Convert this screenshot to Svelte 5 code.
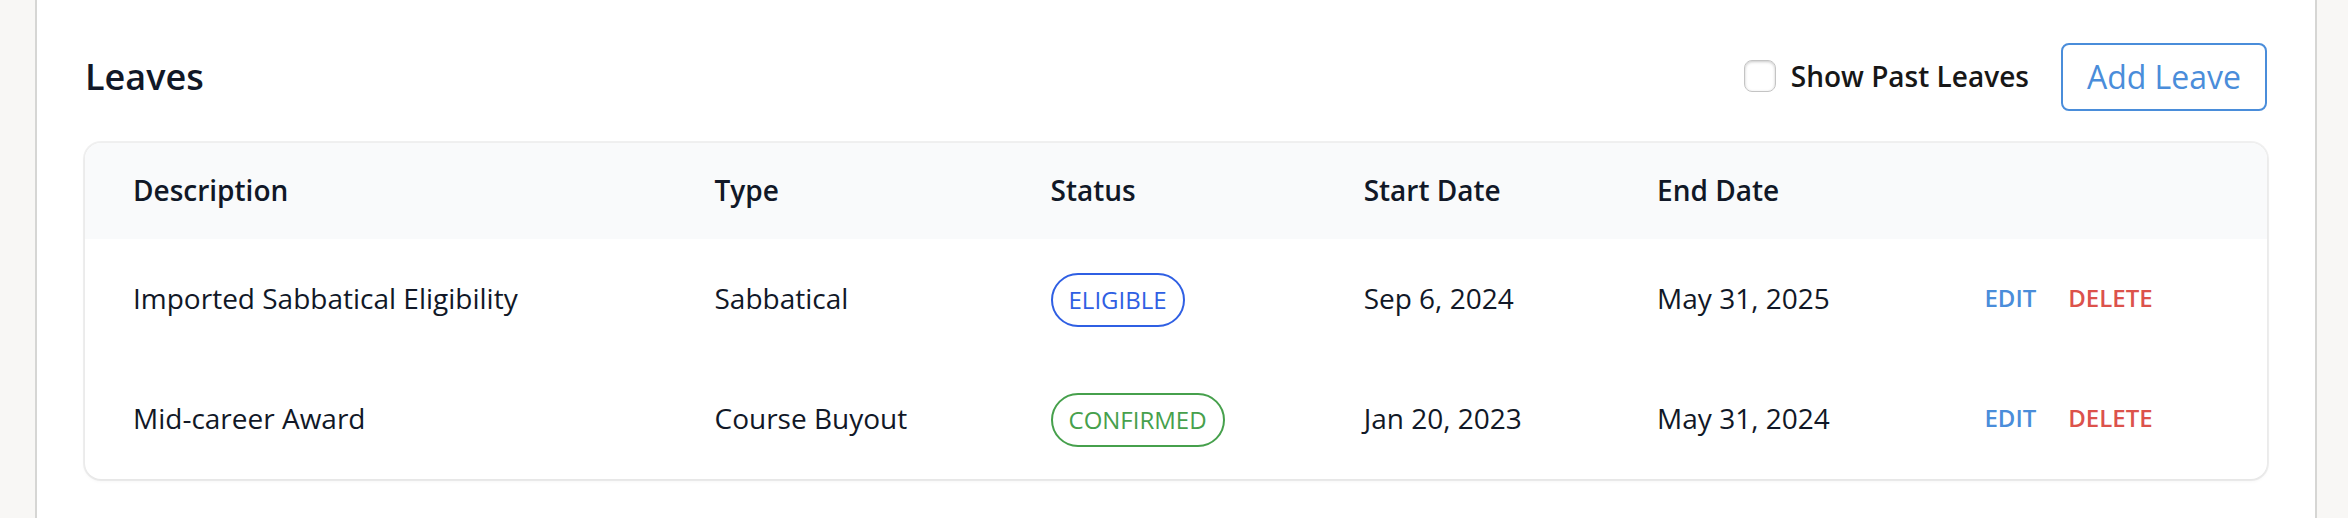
<script>
  let showPast = $state(false);

  const leaves = [
    { description: 'Imported Sabbatical Eligibility', type: 'Sabbatical', status: 'Eligible', start: 'Sep 6, 2024', end: 'May 31, 2025' },
    { description: 'Mid-career Award', type: 'Course Buyout', status: 'Confirmed', start: 'Jan 20, 2023', end: 'May 31, 2024' }
  ];
</script>

<main class="page">
  <section class="panel">
    <header class="toolbar">
      <h2>Leaves</h2>
      <div class="actions">
        <label class="toggle">
          <input type="checkbox" bind:checked={showPast} />
          <span>Show Past Leaves</span>
        </label>
        <button class="add" type="button">Add Leave</button>
      </div>
    </header>

    <div class="card">
      <table>
        <colgroup>
          <col class="c-description" />
          <col class="c-type" />
          <col class="c-status" />
          <col class="c-start" />
          <col class="c-end" />
          <col />
        </colgroup>
        <thead>
          <tr>
            <th scope="col">Description</th>
            <th scope="col">Type</th>
            <th scope="col">Status</th>
            <th scope="col">Start Date</th>
            <th scope="col">End Date</th>
            <td></td>
          </tr>
        </thead>
        <tbody>
          {#each leaves as leave}
            <tr>
              <td>{leave.description}</td>
              <td>{leave.type}</td>
              <td class="status"><span class="badge {leave.status.toLowerCase()}">{leave.status}</span></td>
              <td>{leave.start}</td>
              <td>{leave.end}</td>
              <td>
                <div class="row-actions">
                  <button class="edit" type="button">Edit</button>
                  <button class="delete" type="button">Delete</button>
                </div>
              </td>
            </tr>
          {/each}
        </tbody>
      </table>
    </div>
  </section>
</main>

<style>
  :global(body) {
    background: #f8f7f5;
  }

  .page {
    box-sizing: border-box;
    min-height: 100vh;
    display: flex;
    padding: 0 31px 0 35px;
    font-family: 'Open Sans', 'Noto Sans', sans-serif;
    font-size: 28px;
    line-height: 40px;
    color: #111827;
  }

  .panel {
    flex: 1;
    min-width: 0;
    padding: 43px 48px 32px;
    background: #fff;
    border: solid #d6d6d4;
    border-width: 0 2px;
  }

  .toolbar {
    display: flex;
    align-items: center;
    justify-content: space-between;
    margin-bottom: 32px;
  }

  h2 {
    margin: 0;
    font-size: 36px;
    line-height: 48px;
    font-weight: 600;
  }

  .actions {
    display: flex;
    align-items: center;
    gap: 32px;
  }

  .toggle {
    display: flex;
    align-items: center;
    gap: 15px;
    padding-bottom: 2px;
    font-weight: 600;
    color: #171717;
    cursor: pointer;
  }

  .toggle input {
    appearance: none;
    box-sizing: border-box;
    width: 32px;
    height: 32px;
    margin: 0;
    border: 1px solid #c4c4c4;
    border-radius: 8px;
    background: #fff;
    box-shadow: inset 0 1px 3px rgba(0, 0, 0, 0.22);
  }

  .toggle input:checked {
    background: #4a8dda;
    border-color: #4a8dda;
  }

  button {
    margin: 0;
    font-family: inherit;
    background: none;
    cursor: pointer;
  }

  .add {
    padding: 8px 24px;
    border: 2px solid #4a8dda;
    border-radius: 8px;
    font-size: 32px;
    line-height: 48px;
    color: #4a8dda;
  }

  .card {
    overflow: hidden;
    border-radius: 16px;
    background: #fff;
    box-shadow: 0 0 0 2px rgba(0, 0, 0, 0.06), 0 2px 4px rgba(0, 0, 0, 0.05);
  }

  table {
    width: 100%;
    table-layout: fixed;
    border-collapse: collapse;
  }

  .c-description { width: 27.75%; }
  .c-type { width: 15.4%; }
  .c-status { width: 14.35%; }
  .c-start { width: 13.45%; }
  .c-end { width: 15%; }

  thead {
    background: #f9fafb;
  }

  th,
  td {
    box-sizing: border-box;
    padding: 0 24px 2px;
    text-align: left;
    white-space: nowrap;
  }

  th {
    height: 96px;
    font-weight: 600;
  }

  tbody td {
    height: 120px;
  }

  th:first-child,
  td:first-child {
    padding-left: 48px;
  }

  td.status {
    padding: 2px 24px 0;
  }

  .badge {
    display: inline-block;
    vertical-align: middle;
    padding: 5px 16px;
    border: 2px solid;
    border-radius: 27px;
    font-size: 24px;
    text-transform: uppercase;
  }

  .eligible {
    color: #2f5fe3;
  }

  .confirmed {
    color: #46a04c;
  }

  .row-actions {
    display: flex;
    gap: 32px;
  }

  .row-actions button {
    padding: 0;
    border: 0;
    font-size: 24px;
    line-height: 40px;
    font-weight: 600;
    text-transform: uppercase;
  }

  .row-actions .edit {
    color: #4a8dda;
  }

  .row-actions .delete {
    color: #dc524b;
  }
</style>
